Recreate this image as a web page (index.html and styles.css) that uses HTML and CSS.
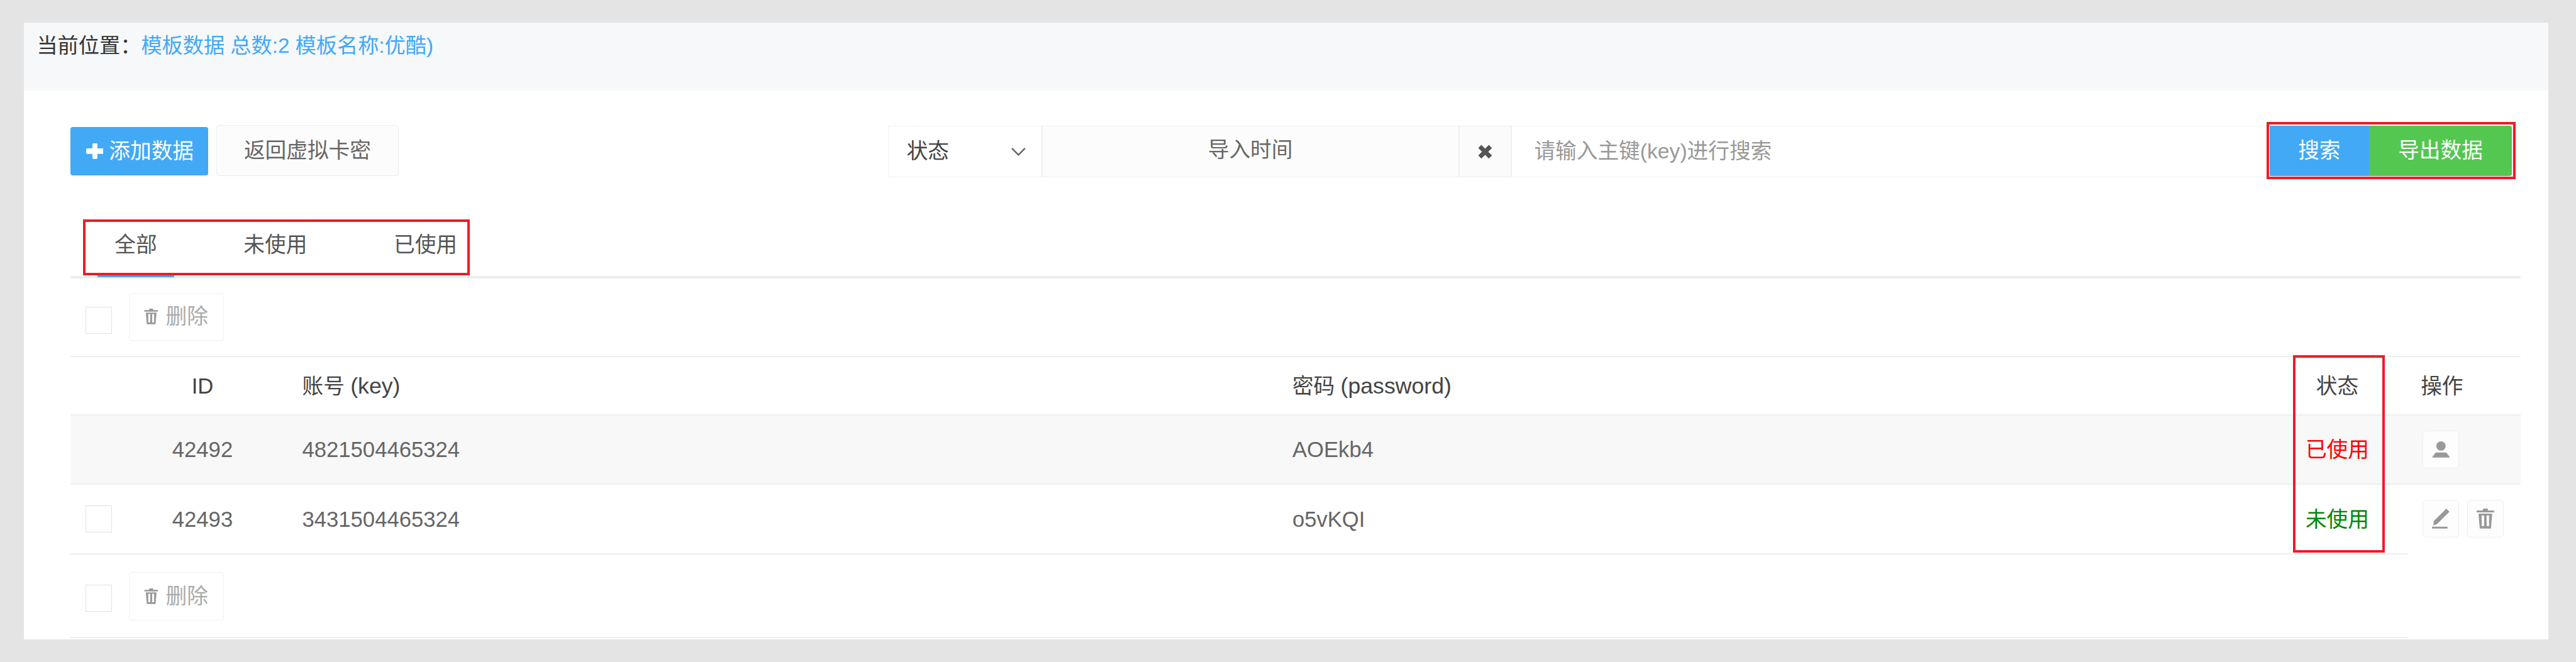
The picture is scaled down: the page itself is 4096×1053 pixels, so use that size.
FILE: index.html
```html
<!DOCTYPE html>
<html lang="zh-CN">
<head>
<meta charset="utf-8">
<title>模板数据</title>
<link rel="stylesheet" href="styles.css">
</head>
<body>
<div class="page">
  <main class="panel">
    <header class="crumb"><span class="crumb-label">当前位置：</span><span class="crumb-link">模板数据 总数:2 模板名称:优酷)</span></header>
    <div class="content">
      <section class="top-bar">
        <button class="btn btn-add" type="button">
          <svg class="ico-plus" viewBox="0 0 28 25"><path d="M10 1.5a1.5 1.5 0 0 1 1.5-1.5h5A1.5 1.5 0 0 1 18 1.500V8h8.500A1.500 1.500 0 0 1 28 9.500v6a1.500 1.500 0 0 1-1.500 1.500H18v6.500a1.500 1.500 0 0 1-1.500 1.500h-5a1.500 1.500 0 0 1-1.500-1.500V17H1.500A1.500 1.500 0 0 1 0 15.500v-6A1.500 1.500 0 0 1 1.500 8H10z"/></svg>
          <span>添加数据</span>
        </button>
        <button class="btn btn-back" type="button">返回虚拟卡密</button>
        <form class="filters">
          <div class="f-select"><span>状态</span>
            <svg class="ico-chev" viewBox="0 0 23 13"><path d="M1 1l10.500 10.500L22 1"/></svg>
          </div>
          <div class="f-date">导入时间</div>
          <div class="f-clear"><svg class="ico-x" viewBox="0 0 23 23"><path d="M3 3l17 17M20 3L3 20"/></svg></div>
          <input class="f-input" type="text" placeholder="请输入主键(key)进行搜索">
          <div class="f-actions">
            <button class="f-btn f-search" type="button">搜索</button>
            <button class="f-btn f-export" type="button">导出数据</button>
            <i class="mark mark-actions"></i>
          </div>
        </form>
      </section>

      <nav class="tabs">
        <a class="tab tab-active">全部</a>
        <a class="tab">未使用</a>
        <a class="tab">已使用</a>
        <i class="mark mark-tabs"></i>
      </nav>

      <div class="bulk">
        <span class="check check-bulk"></span>
        <button class="btn-del" type="button">
          <svg class="ico-trash-s" viewBox="0 0 28 32"><path fill-rule="evenodd" d="M10 0h8v3h10v3H0V3h10zM3 8h22l-2 24H5zM8 11v17h4V11zM16 11v17h4V11z"/></svg>
          <span>删除</span>
        </button>
      </div>

      <div class="table">
        <div class="row row-head">
          <div class="cell"></div>
          <div class="cell c-id num">ID</div>
          <div class="cell c-key">账号 <span class="lat">(key)</span></div>
          <div class="cell">密码 <span class="lat">(password)</span></div>
          <div class="cell c-status">状态</div>
          <div class="cell c-act">操作</div>
        </div>
        <div class="row row-a">
          <div class="cell"></div>
          <div class="cell c-id num">42492</div>
          <div class="cell c-key num">4821504465324</div>
          <div class="cell num">AOEkb4</div>
          <div class="cell c-status used">已使用</div>
          <div class="c-tools">
            <button class="icon-btn" type="button"><svg class="ico-user" viewBox="0 0 29 26"><circle cx="14.500" cy="7.500" r="7.500"/><path d="M6 18h17l6 8H0z"/></svg></button>
          </div>
        </div>
        <div class="row row-b">
          <div class="c-check"><span class="check"></span></div>
          <div class="cell c-id num">42493</div>
          <div class="cell c-key num">3431504465324</div>
          <div class="cell num">o5vKQI</div>
          <div class="cell c-status free">未使用</div>
          <div class="c-tools">
            <button class="icon-btn" type="button"><svg class="ico-edit" viewBox="0 0 28 32"><path d="M23 0l5 5L8 25l-6 2 1-7zM0 29h25v3H0z"/></svg></button>
            <button class="icon-btn" type="button"><svg class="ico-trash" viewBox="0 0 28 32"><path fill-rule="evenodd" d="M10 0h8v3h10v3H0V3h10zM3 8h22l-2 24H5zM8 11v17h4V11zM16 11v17h4V11z"/></svg></button>
          </div>
        </div>
        <i class="mark mark-status"></i>
      </div>

      <div class="bulk bulk-end">
        <span class="check check-end"></span>
        <button class="btn-del" type="button">
          <svg class="ico-trash-s" viewBox="0 0 28 32"><path fill-rule="evenodd" d="M10 0h8v3h10v3H0V3h10zM3 8h22l-2 24H5zM8 11v17h4V11zM16 11v17h4V11z"/></svg>
          <span>删除</span>
        </button>
      </div>
    </div>
  </main>
</div>
</body>
</html>
```

FILE: styles.css
```css
html { zoom: 0.9908; }
* { box-sizing: border-box; }
body {
  margin: 0;
  font: 34px/36px "Liberation Sans", "Noto Sans CJK SC", sans-serif;
  color: #666;
  overflow: hidden;
}
button, input { font: inherit; margin: 0; outline: 0; }
.page {
  height: 1063px;
  background: #e4e4e4;
  padding: 36px 44px 37px 38px;
}
.panel { height: 990px; background: #fff; overflow: hidden; }

.crumb {
  height: 109px;
  background: #f6f8f9;
  padding: 20px 0 0 21px;
  font-size: 33.500px;
}
.crumb-label { color: #333; }
.crumb-link { color: #42a9f6; }

.content { padding: 56px 45px 0 75px; }

.top-bar { display: flex; align-items: flex-start; height: 84px; }
.btn { border-radius: 4px; padding: 0; cursor: pointer; }
.btn-add {
  width: 221px;
  height: 78px;
  margin-top: 3px;
  border: 0;
  background: #42a9f6;
  color: #fff;
  display: flex;
  align-items: center;
  gap: 9px;
  padding-left: 25px;
}
.ico-plus { width: 28px; height: 25px; fill: #fff; }
.btn-back {
  width: 293px;
  height: 82px;
  margin-left: 13px;
  border: 2px solid #ececec;
  background: #fcfcfc;
  color: #666;
}

.filters { display: flex; height: 83px; margin: 1px 14px 0 auto; }
.f-select, .f-date, .f-clear, .f-input {
  height: 83px;
  border: 2px solid #efefef;
  border-right-width: 1px;
  border-left-width: 1px;
  background: #fff;
}
.f-select {
  width: 247px;
  display: flex;
  align-items: center;
  justify-content: space-between;
  padding: 0 25px 0 29px;
  color: #444;
}
.ico-chev { width: 23px; height: 13px; fill: none; stroke: #666; stroke-width: 2.500; }
.f-date {
  width: 669px;
  background: #fcfcfc;
  text-align: center;
  line-height: 76px;
}
.f-clear {
  width: 84px;
  background: #fbfbfb;
  display: flex;
  align-items: center;
  justify-content: center;
}
.ico-x { width: 23px; height: 23px; fill: none; stroke: #555; stroke-width: 7; }
.f-input { width: 1217px; padding: 0 0 0 36px; color: #666; border-right: 0; }
.f-input::placeholder { color: #999; opacity: 1; }

.f-actions { display: flex; position: relative; height: 81px; }
.f-btn { height: 81px; border: 0; color: #fff; padding: 0; }
.f-search { width: 160px; background: #42a9f6; }
.f-export { width: 229px; background: #53c750; border-radius: 0 4px 4px 0; }

.mark { position: absolute; display: block; border: 5px solid #ed1c24; pointer-events: none; }
.mark-actions { left: -5px; top: -6px; width: 400px; height: 92px; }
.mark-tabs { left: 20px; top: 67px; width: 621px; height: 90px; }
.mark-status { left: 3567px; top: -3px; width: 147px; height: 317px; }

.tabs {
  position: relative;
  display: flex;
  align-items: flex-end;
  gap: 83px;
  height: 162px;
  padding-left: 43px;
  border-bottom: 5px solid #eee;
}
.tab {
  padding: 0 28px 30px;
  border-bottom: 4px solid transparent;
  margin-bottom: -2px;
  color: #555;
}
.tab-active { border-bottom-color: #42a9f6; }

.bulk {
  display: flex;
  align-items: flex-start;
  height: 126px;
  padding: 23px 0 0 24px;
  border-bottom: 3px solid #eee;
}
.check {
  display: block;
  width: 43px;
  height: 43px;
  border: 2px solid #e2e2e2;
  background: #fff;
}
.check-bulk { margin: 23px 27px 0 0; }
.check-end { margin: 20px 27px 0 0; }
.btn-del {
  width: 152px;
  height: 77px;
  border: 2px solid #f1f1f1;
  border-radius: 4px;
  background: #fff;
  color: #aaa;
  display: flex;
  align-items: center;
  gap: 12px;
  padding: 0 0 0 23px;
}
.ico-trash-s { width: 23px; height: 25px; fill: #999; }

.table { position: relative; }
.row {
  display: grid;
  grid-template-columns: 152px 120px 1689px 1602px 150px 219px;
  align-items: center;
}
.row-head { height: 94px; color: #444; border-bottom: 3px solid #eee; }
.row-a { height: 111px; background: #f8f8f8; border-bottom: 3px solid #eee; }
.row-b { height: 110px; }
.cell { padding-top: 3px; }
.c-id { text-align: center; }
.c-key { padding-left: 100px; }
.c-status { text-align: center; }
.c-act { padding-left: 59px; }
.c-tools { padding-left: 62px; display: flex; gap: 14px; }
.c-check { padding-left: 24px; }
.used { color: #f00; }
.free { color: #080; }
.num { font-size: 35px; }
.lat { font-size: 36px; }

.icon-btn {
  width: 58px;
  height: 61px;
  border: 2px solid #eee;
  border-radius: 6px;
  background: #fdfdfd;
  padding: 0;
  display: flex;
  align-items: center;
  justify-content: center;
}
.ico-user { width: 29px; height: 26px; fill: #999; }
.ico-edit { width: 28px; height: 32px; fill: #999; }
.ico-trash { width: 28px; height: 32px; fill: #999; }

.bulk-end {
  height: 137px;
  margin-right: 182px;
  padding-top: 29px;
  border-top: 3px solid #eee;
}
```
